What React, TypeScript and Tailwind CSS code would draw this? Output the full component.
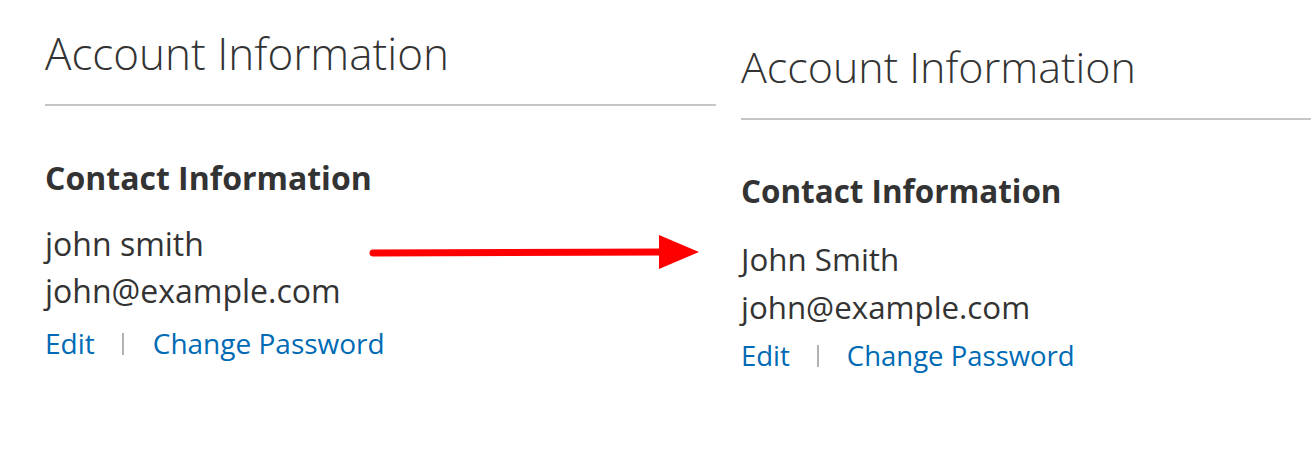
import React from 'react';

type Variant = 'left' | 'right';

const styles: Record<Variant, Record<string, string>> = {
  left: {
    wrap: 'w-[671px] ml-[45px] shrink-0',
    title: 'mt-[27px] pb-[25px] border-b-2 border-[#c6c6c6] text-[44px] leading-[52px] font-light',
    heading: 'mt-[52px] text-[32px] leading-[40px] font-bold',
    body: 'mt-[22px] text-[32px] leading-[47px]',
    links: 'mt-[6px] text-[28px] leading-[47px]',
    sep: 'ml-[27px] mr-[29px]',
  },
  right: {
    wrap: 'flex-1 ml-[25px]',
    title: 'mt-[41px] pb-[25px] border-b-2 border-[#c6c6c6] text-[43px] leading-[52px] font-light',
    heading: 'mt-[51px] text-[31.4px] leading-[40px] font-bold',
    body: 'mt-[24px] text-[31.3px] leading-[48px]',
    links: 'mt-[1px] text-[27.5px] leading-[48px]',
    sep: 'ml-[27px] mr-[28px]',
  },
};

function AccountBox({ variant, name }: { variant: Variant; name: string }) {
  const s = styles[variant];
  return (
    <div className={s.wrap}>
      <h1 className={s.title}>Account Information</h1>
      <h2 className={s.heading}>Contact Information</h2>
      <p className={s.body}>
        {name}
        <br />
        john@example.com
      </p>
      <div className={`${s.links} flex items-center`}>
        <a href="#" className="text-[#006bb4]">Edit</a>
        <span className={`${s.sep} h-[22px] w-[2px] bg-[#b3b3b3]`} />
        <a href="#" className="text-[#006bb4]">Change Password</a>
      </div>
    </div>
  );
}

export default function App() {
  return (
    <div
      className="relative w-[1311px] h-[452px] overflow-hidden bg-white text-[#333]"
      style={{ fontFamily: '"Open Sans", sans-serif' }}
    >
      <div className="flex">
        <AccountBox variant="left" name="john smith" />
        <AccountBox variant="right" name="John Smith" />
      </div>
      {/* red annotation arrow */}
      <svg className="absolute left-[365px] top-[230px]" width="345" height="45" viewBox="0 0 345 45">
        <line x1="8" y1="23" x2="300" y2="22" stroke="#ff0000" strokeWidth="7" strokeLinecap="round" />
        <polygon points="294,5 334,22 294,39" fill="#ff0000" />
      </svg>
    </div>
  );
}
